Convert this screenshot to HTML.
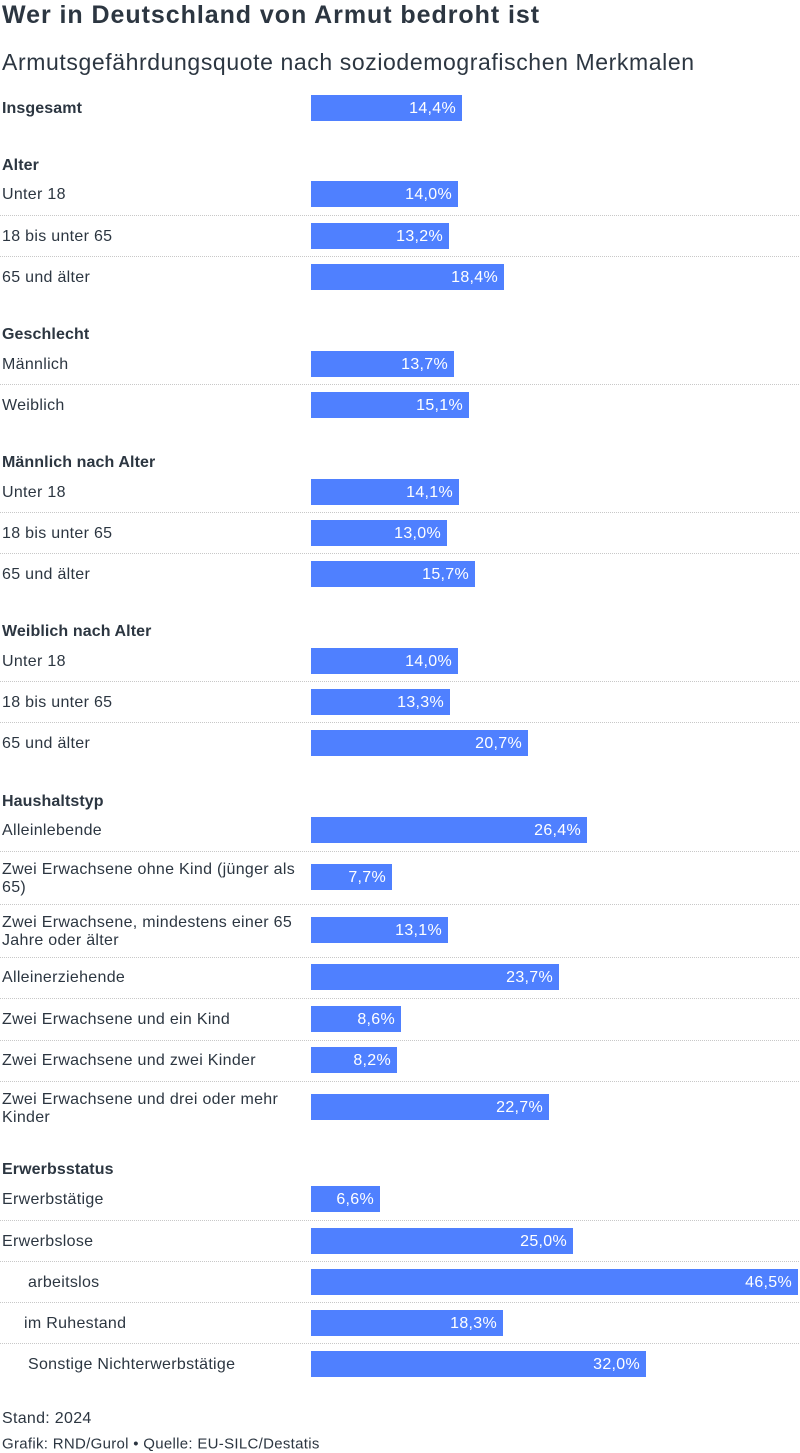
<!DOCTYPE html>
<html><head><meta charset="utf-8"><style>
body{margin:0;width:800px;height:1453px;background:#fff;position:relative;font-family:"Liberation Sans",sans-serif;color:#2c3641;overflow:hidden}
div{position:absolute}
.t{left:2px;top:1px;font-size:25px;font-weight:bold;letter-spacing:0.95px}
.s{left:2px;top:49px;font-size:23px;letter-spacing:0.6px;color:#2c3641}
.h{left:2px;font-size:16px;font-weight:bold;transform:translateY(-45%);letter-spacing:0.1px}
.l{left:2px;font-size:16px;transform:translateY(-45%);line-height:18px;width:300px;letter-spacing:0.3px}
.b{left:311px;height:26px;background:#4f80ff;color:#fff;font-size:16px;line-height:27px;text-align:right;box-sizing:border-box;padding-right:6px;transform:translateY(-50%);letter-spacing:0.3px}
.d{left:0;width:799px;border-top:1px dotted #c8c8c8;height:0}
.f{left:2px;font-size:15px;transform:translateY(-45%);letter-spacing:0.3px}
</style></head><body>
<div class="t">Wer in Deutschland von Armut bedroht ist</div>
<div class="s">Armutsgefährdungsquote nach soziodemografischen Merkmalen</div>

<div class="h" style="top:108px">Insgesamt</div><div class="b" style="top:108px;width:151px">14,4%</div>

<div class="h" style="top:165px">Alter</div>
<div class="l" style="top:194px">Unter 18</div><div class="b" style="top:194px;width:147px">14,0%</div>
<div class="d" style="top:215px"></div>
<div class="l" style="top:236px">18 bis unter 65</div><div class="b" style="top:236px;width:138px">13,2%</div>
<div class="d" style="top:256px"></div>
<div class="l" style="top:277px">65 und älter</div><div class="b" style="top:277px;width:193px">18,4%</div>

<div class="h" style="top:334px">Geschlecht</div>
<div class="l" style="top:364px">Männlich</div><div class="b" style="top:364px;width:143px">13,7%</div>
<div class="d" style="top:384px"></div>
<div class="l" style="top:405px">Weiblich</div><div class="b" style="top:405px;width:158px">15,1%</div>

<div class="h" style="top:462px">Männlich nach Alter</div>
<div class="l" style="top:492px">Unter 18</div><div class="b" style="top:492px;width:148px">14,1%</div>
<div class="d" style="top:512px"></div>
<div class="l" style="top:533px">18 bis unter 65</div><div class="b" style="top:533px;width:136px">13,0%</div>
<div class="d" style="top:553px"></div>
<div class="l" style="top:574px">65 und älter</div><div class="b" style="top:574px;width:164px">15,7%</div>

<div class="h" style="top:631px">Weiblich nach Alter</div>
<div class="l" style="top:661px">Unter 18</div><div class="b" style="top:661px;width:147px">14,0%</div>
<div class="d" style="top:681px"></div>
<div class="l" style="top:702px">18 bis unter 65</div><div class="b" style="top:702px;width:139px">13,3%</div>
<div class="d" style="top:722px"></div>
<div class="l" style="top:743px">65 und älter</div><div class="b" style="top:743px;width:217px">20,7%</div>

<div class="h" style="top:801px">Haushaltstyp</div>
<div class="l" style="top:830px">Alleinlebende</div><div class="b" style="top:830px;width:276px">26,4%</div>
<div class="d" style="top:851px"></div>
<div class="l" style="top:877px">Zwei Erwachsene ohne Kind (jünger als<br>65)</div><div class="b" style="top:877px;width:81px">7,7%</div>
<div class="d" style="top:904px"></div>
<div class="l" style="top:930px">Zwei Erwachsene, mindestens einer 65<br>Jahre oder älter</div><div class="b" style="top:930px;width:137px">13,1%</div>
<div class="d" style="top:957px"></div>
<div class="l" style="top:977px">Alleinerziehende</div><div class="b" style="top:977px;width:248px">23,7%</div>
<div class="d" style="top:998px"></div>
<div class="l" style="top:1019px">Zwei Erwachsene und ein Kind</div><div class="b" style="top:1019px;width:90px">8,6%</div>
<div class="d" style="top:1040px"></div>
<div class="l" style="top:1060px">Zwei Erwachsene und zwei Kinder</div><div class="b" style="top:1060px;width:86px">8,2%</div>
<div class="d" style="top:1081px"></div>
<div class="l" style="top:1107px">Zwei Erwachsene und drei oder mehr<br>Kinder</div><div class="b" style="top:1107px;width:238px">22,7%</div>

<div class="h" style="top:1169px">Erwerbsstatus</div>
<div class="l" style="top:1199px">Erwerbstätige</div><div class="b" style="top:1199px;width:69px">6,6%</div>
<div class="d" style="top:1220px"></div>
<div class="l" style="top:1241px">Erwerbslose</div><div class="b" style="top:1241px;width:262px">25,0%</div>
<div class="d" style="top:1261px"></div>
<div class="l" style="top:1282px;left:28px">arbeitslos</div><div class="b" style="top:1282px;width:487px">46,5%</div>
<div class="d" style="top:1302px"></div>
<div class="l" style="top:1323px;left:24px">im Ruhestand</div><div class="b" style="top:1323px;width:192px">18,3%</div>
<div class="d" style="top:1343px"></div>
<div class="l" style="top:1364px;left:28px">Sonstige Nichterwerbstätige</div><div class="b" style="top:1364px;width:335px">32,0%</div>

<div class="f" style="top:1418px;font-size:16px">Stand: 2024</div>
<div class="f" style="top:1443px">Grafik: RND/Gurol • Quelle: EU-SILC/Destatis</div>
</body></html>
